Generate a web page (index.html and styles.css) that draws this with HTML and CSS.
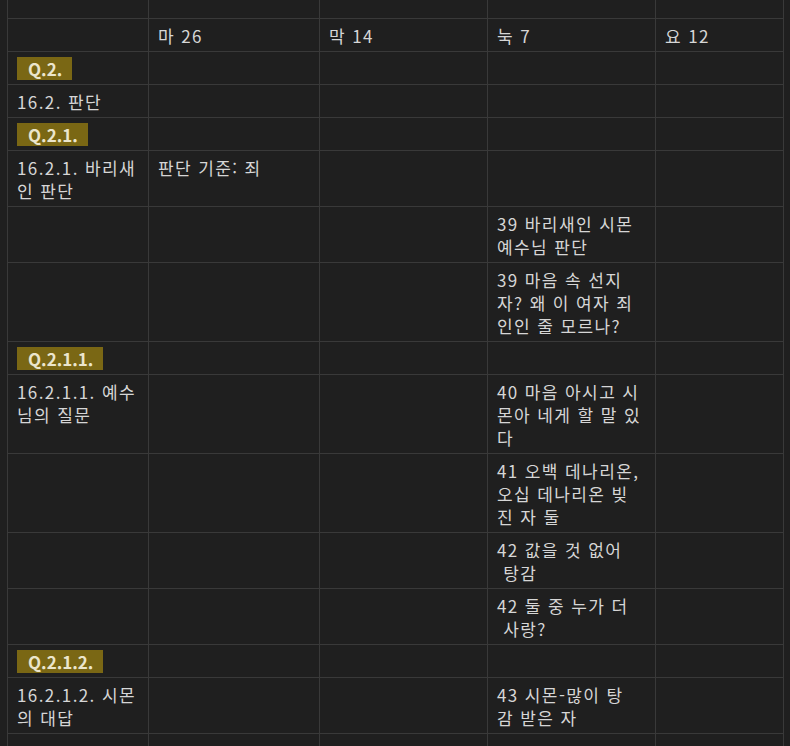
FILE: index.html
```html
<!DOCTYPE html>
<html lang="ko">
<head>
<meta charset="utf-8">
<link rel="stylesheet" href="styles.css">
</head>
<body>
<table class="grid">
  <colgroup>
    <col class="c1"><col class="c2"><col class="c3"><col class="c4"><col class="c5">
  </colgroup>
  <tr><td></td><td></td><td></td><td></td><td></td></tr>
  <tr><td></td><td>마 26</td><td>막 14</td><td>눅 7</td><td>요 12</td></tr>
  <tr><td><span class="tag">Q.2.</span></td><td></td><td></td><td></td><td></td></tr>
  <tr><td>16.2. 판단</td><td></td><td></td><td></td><td></td></tr>
  <tr><td><span class="tag">Q.2.1.</span></td><td></td><td></td><td></td><td></td></tr>
  <tr><td>16.2.1. 바리새<br>인 판단</td><td>판단 기준: 죄</td><td></td><td></td><td></td></tr>
  <tr><td></td><td></td><td></td><td>39 바리새인 시몬<br>예수님 판단</td><td></td></tr>
  <tr><td></td><td></td><td></td><td>39 마음 속 선지<br>자? 왜 이 여자 죄<br>인인 줄 모르나?</td><td></td></tr>
  <tr><td><span class="tag">Q.2.1.1.</span></td><td></td><td></td><td></td><td></td></tr>
  <tr><td>16.2.1.1. 예수<br>님의 질문</td><td></td><td></td><td>40 마음 아시고 시<br>몬아 네게 할 말 있<br>다</td><td></td></tr>
  <tr><td></td><td></td><td></td><td>41 오백 데나리온,<br>오십 데나리온 빚<br>진 자 둘</td><td></td></tr>
  <tr><td></td><td></td><td></td><td>42 값을 것 없어<br>&nbsp;탕감</td><td></td></tr>
  <tr><td></td><td></td><td></td><td>42 둘 중 누가 더<br>&nbsp;사랑?</td><td></td></tr>
  <tr><td><span class="tag">Q.2.1.2.</span></td><td></td><td></td><td></td><td></td></tr>
  <tr><td>16.2.1.2. 시몬<br>의 대답</td><td></td><td></td><td>43 시몬-많이 탕<br>감 받은 자</td><td></td></tr>
  <tr><td></td><td></td><td></td><td></td><td></td></tr>
</table>
</body>
</html>
```

FILE: styles.css
```css
html, body {
  margin: 0;
  padding: 0;
  background: #1f1f1f;
  overflow: hidden;
}
body {
  height: 746px;
}
.grid {
  margin: -15px 0 0 7px;
  border-collapse: collapse;
  table-layout: fixed;
  width: 776px;
  font-family: "Noto Sans CJK KR", sans-serif;
  font-size: 17px;
  line-height: 23px;
  letter-spacing: 1.4px;
  color: #d6d6d6;
}
.c1 { width: 141px; }
.c2 { width: 171px; }
.c3 { width: 168px; }
.c4 { width: 168px; }
.c5 { width: 128px; }
.grid td {
  border: 1px solid #393939;
  padding: 5px 9px 4px 9px;
  height: 23px;
  vertical-align: top;
  white-space: nowrap;
}
.tag {
  display: inline-block;
  vertical-align: top;
  background: #7a6714;
  color: #ebe5cc;
  font-size: 17px;
  font-weight: 700;
  letter-spacing: 0;
  padding: 0 10px 0 11px;
  height: 23px;
}
```
